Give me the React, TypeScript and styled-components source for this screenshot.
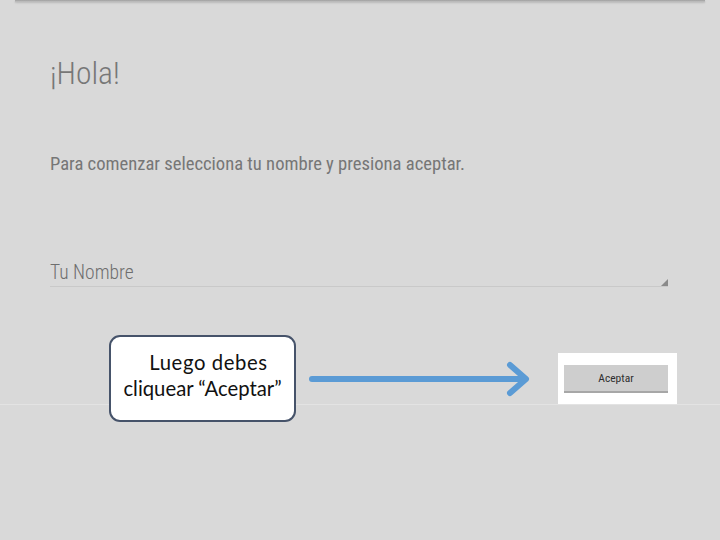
import React from "react";
import styled, { createGlobalStyle } from "styled-components";

const GlobalStyle = createGlobalStyle`
  html, body {
    margin: 0;
    padding: 0;
    background: #d9d9d9;
  }
  body {
    width: 720px;
    height: 540px;
    overflow: hidden;
  }
`;

const Page = styled.div`
  position: relative;
  width: 720px;
  height: 540px;
  background: #d9d9d9;
  display: flex;
  flex-direction: column;
  font-family: "Roboto Condensed", "Liberation Sans Narrow", Roboto, sans-serif;
`;

const TopEdge = styled.div`
  margin: 0 15px;
  height: 2px;
  background: linear-gradient(#9e9e9e, #c4c4c4);
  box-shadow: 0 1px 2px rgba(0, 0, 0, 0.15);
`;

const Content = styled.div`
  display: flex;
  flex-direction: column;
  padding: 0 52px 0 50px;
`;

const Title = styled.h1`
  margin: 56px 0 0;
  font-size: 31.5px;
  line-height: 31px;
  font-weight: 300;
  color: #777777;
`;

const Intro = styled.p`
  margin: 64px 0 0;
  font-size: 18.6px;
  line-height: 22px;
  color: #767676;
`;

const SelectField = styled.div`
  margin-top: 84px;
  display: flex;
  justify-content: space-between;
  align-items: flex-end;
  height: 28px;
  border-bottom: 1px solid #c9c9c9;
  box-sizing: border-box;
`;

const SelectLabel = styled.span`
  font-size: 19.5px;
  line-height: 22px;
  font-weight: 300;
  color: #6e6e6e;
  padding-bottom: 2px;
`;

const Caret = styled.span`
  width: 0;
  height: 0;
  border-left: 7px solid transparent;
  border-bottom: 7px solid #8a8a8a;
`;

const ActionBar = styled.div`
  height: 117px;
  display: flex;
  justify-content: flex-end;
  align-items: flex-end;
  padding-right: 43px;
`;

const Highlight = styled.div`
  background: #ffffff;
  padding: 12px 9px 11px 6px;
`;

const AcceptButton = styled.button`
  width: 104px;
  height: 28px;
  border: none;
  border-bottom: 2px solid #a7a7a7;
  background: #cecece;
  color: #2e2e2e;
  font-family: "Roboto Condensed", "Liberation Sans Narrow", Roboto, sans-serif;
  font-size: 11.5px;
  padding: 0;
  cursor: pointer;
`;

const Footer = styled.div`
  flex: 1;
  border-top: 1px solid #e3e3e3;
`;

const Callout = styled.div`
  position: absolute;
  left: 109px;
  top: 335px;
  width: 187px;
  height: 87px;
  box-sizing: border-box;
  border: 2.5px solid #46536a;
  border-radius: 11px;
  background: #ffffff;
  display: flex;
  flex-direction: column;
  align-items: center;
  justify-content: center;
  padding-bottom: 8px;
  font-family: Lato, "Open Sans", sans-serif;
  font-size: 20.3px;
  line-height: 26px;
  color: #111;
  text-align: center;
`;

const FirstLine = styled.span`
  letter-spacing: 0.6px;
  padding-left: 12px;
`;

const ArrowSvg = styled.svg`
  position: absolute;
  left: 305px;
  top: 358px;
`;

export default function App() {
  return (
    <>
      <GlobalStyle />
      <Page>
        <TopEdge />
        <Content>
          <Title>¡Hola!</Title>
          <Intro>Para comenzar selecciona tu nombre y presiona aceptar.</Intro>
          <SelectField>
            <SelectLabel>Tu Nombre</SelectLabel>
            <Caret />
          </SelectField>
        </Content>
        <ActionBar>
          <Highlight>
            <AcceptButton>Aceptar</AcceptButton>
          </Highlight>
        </ActionBar>
        <Footer />
        <Callout>
          <FirstLine>Luego debes</FirstLine>
          <span>cliquear “Aceptar”</span>
        </Callout>
        <ArrowSvg width="232" height="42" viewBox="0 0 232 42">
          <g stroke="#5b9bd5" strokeWidth="6" strokeLinecap="round" strokeLinejoin="round" fill="none">
            <line x1="7" y1="21" x2="220" y2="21" />
            <polyline points="205,7 221,21 205,35" />
          </g>
        </ArrowSvg>
      </Page>
    </>
  );
}
